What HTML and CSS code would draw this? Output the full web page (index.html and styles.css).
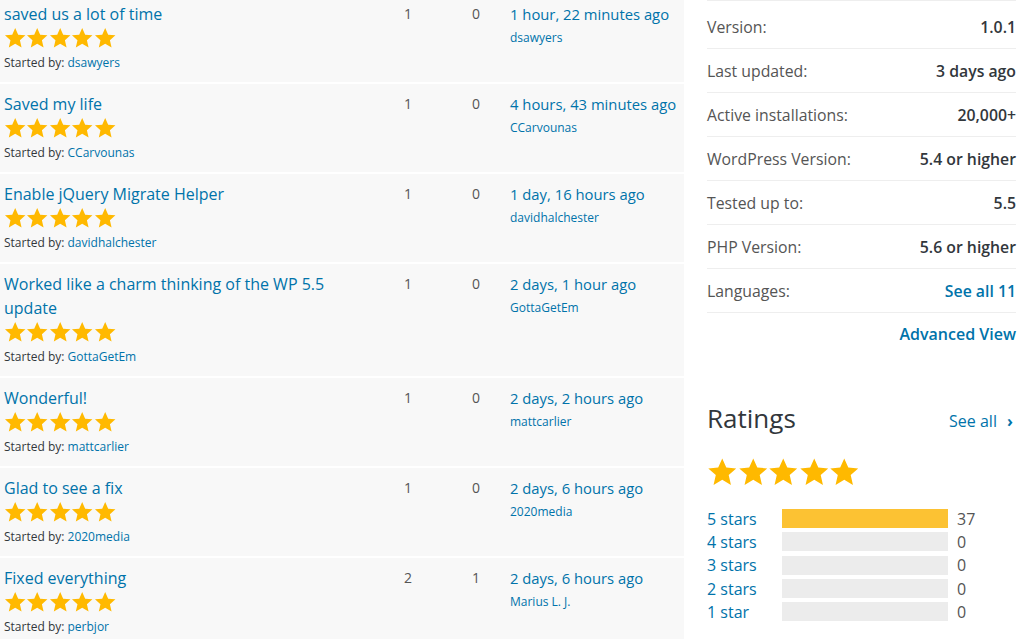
FILE: index.html
```html
<!DOCTYPE html>
<html lang="en">
<head>
  <meta charset="UTF-8" />
  <title>jQuery Migrate Helper - Support</title>
  <link rel="stylesheet" href="styles.css">
</head>
<body>
  <svg class="defs" width="0" height="0" aria-hidden="true">
    <symbol id="star" viewBox="0 0 20 20">
      <polygon points="10,1 12.7,7 19.3,7.6 14.3,12 15.8,18.6 10,15.2 4.2,18.6 5.7,12 0.7,7.6 7.3,7"/>
    </symbol>
  </svg>

  <div class="page">
    <div class="topics">
      <div class="topic">
        <div class="title">
          <a href="#">saved us a lot of time</a>
          <div class="stars"><svg><use href="#star"/></svg><svg><use href="#star"/></svg><svg><use href="#star"/></svg><svg><use href="#star"/></svg><svg><use href="#star"/></svg></div>
          <p class="starter">Started by: <a href="#">dsawyers</a></p>
        </div>
        <div class="count">1</div>
        <div class="count voices">0</div>
        <div class="fresh">
          <a href="#">1 hour, 22 minutes ago</a>
          <a class="author" href="#">dsawyers</a>
        </div>
      </div>

      <div class="topic">
        <div class="title">
          <a href="#">Saved my life</a>
          <div class="stars"><svg><use href="#star"/></svg><svg><use href="#star"/></svg><svg><use href="#star"/></svg><svg><use href="#star"/></svg><svg><use href="#star"/></svg></div>
          <p class="starter">Started by: <a href="#">CCarvounas</a></p>
        </div>
        <div class="count">1</div>
        <div class="count voices">0</div>
        <div class="fresh">
          <a href="#">4 hours, 43 minutes ago</a>
          <a class="author" href="#">CCarvounas</a>
        </div>
      </div>

      <div class="topic">
        <div class="title">
          <a href="#">Enable jQuery Migrate Helper</a>
          <div class="stars"><svg><use href="#star"/></svg><svg><use href="#star"/></svg><svg><use href="#star"/></svg><svg><use href="#star"/></svg><svg><use href="#star"/></svg></div>
          <p class="starter">Started by: <a href="#">davidhalchester</a></p>
        </div>
        <div class="count">1</div>
        <div class="count voices">0</div>
        <div class="fresh">
          <a href="#">1 day, 16 hours ago</a>
          <a class="author" href="#">davidhalchester</a>
        </div>
      </div>

      <div class="topic">
        <div class="title">
          <a href="#">Worked like a charm thinking of the WP 5.5 update</a>
          <div class="stars"><svg><use href="#star"/></svg><svg><use href="#star"/></svg><svg><use href="#star"/></svg><svg><use href="#star"/></svg><svg><use href="#star"/></svg></div>
          <p class="starter">Started by: <a href="#">GottaGetEm</a></p>
        </div>
        <div class="count">1</div>
        <div class="count voices">0</div>
        <div class="fresh">
          <a href="#">2 days, 1 hour ago</a>
          <a class="author" href="#">GottaGetEm</a>
        </div>
      </div>

      <div class="topic">
        <div class="title">
          <a href="#">Wonderful!</a>
          <div class="stars"><svg><use href="#star"/></svg><svg><use href="#star"/></svg><svg><use href="#star"/></svg><svg><use href="#star"/></svg><svg><use href="#star"/></svg></div>
          <p class="starter">Started by: <a href="#">mattcarlier</a></p>
        </div>
        <div class="count">1</div>
        <div class="count voices">0</div>
        <div class="fresh">
          <a href="#">2 days, 2 hours ago</a>
          <a class="author" href="#">mattcarlier</a>
        </div>
      </div>

      <div class="topic">
        <div class="title">
          <a href="#">Glad to see a fix</a>
          <div class="stars"><svg><use href="#star"/></svg><svg><use href="#star"/></svg><svg><use href="#star"/></svg><svg><use href="#star"/></svg><svg><use href="#star"/></svg></div>
          <p class="starter">Started by: <a href="#">2020media</a></p>
        </div>
        <div class="count">1</div>
        <div class="count voices">0</div>
        <div class="fresh">
          <a href="#">2 days, 6 hours ago</a>
          <a class="author" href="#">2020media</a>
        </div>
      </div>

      <div class="topic">
        <div class="title">
          <a href="#">Fixed everything</a>
          <div class="stars"><svg><use href="#star"/></svg><svg><use href="#star"/></svg><svg><use href="#star"/></svg><svg><use href="#star"/></svg><svg><use href="#star"/></svg></div>
          <p class="starter">Started by: <a href="#">perbjor</a></p>
        </div>
        <div class="count">2</div>
        <div class="count voices">1</div>
        <div class="fresh">
          <a href="#">2 days, 6 hours ago</a>
          <a class="author" href="#">Marius L. J.</a>
        </div>
      </div>
    </div>

    <aside class="sidebar">
      <ul class="meta">
        <li><span>Version:</span><strong>1.0.1</strong></li>
        <li><span>Last updated:</span><strong>3 days ago</strong></li>
        <li><span>Active installations:</span><strong>20,000+</strong></li>
        <li><span>WordPress Version:</span><strong>5.4 or higher</strong></li>
        <li><span>Tested up to:</span><strong>5.5</strong></li>
        <li><span>PHP Version:</span><strong>5.6 or higher</strong></li>
        <li><span>Languages:</span><a href="#">See all 11</a></li>
      </ul>
      <a class="advanced" href="#">Advanced View</a>

      <div class="ratings">
        <div class="ratings-head">
          <h2>Ratings</h2>
          <a href="#">See all <span class="chev">&#8250;</span></a>
        </div>
        <div class="big-stars"><svg><use href="#star"/></svg><svg><use href="#star"/></svg><svg><use href="#star"/></svg><svg><use href="#star"/></svg><svg><use href="#star"/></svg></div>
        <ul class="bars">
          <li><a href="#">5 stars</a><span class="bar"><span class="fill" style="width: 100%"></span></span><span class="num">37</span></li>
          <li><a href="#">4 stars</a><span class="bar"></span><span class="num">0</span></li>
          <li><a href="#">3 stars</a><span class="bar"></span><span class="num">0</span></li>
          <li><a href="#">2 stars</a><span class="bar"></span><span class="num">0</span></li>
          <li><a href="#">1 star</a><span class="bar"></span><span class="num">0</span></li>
        </ul>
      </div>
    </aside>
  </div>
</body>
</html>
```

FILE: styles.css
```css
* {
  margin: 0; padding: 0; box-sizing: border-box;
}

body {
  font-family: 'Open Sans', 'DejaVu Sans', sans-serif;
  color: #32373c;
  background: #fff;
  overflow: hidden;
}

a {
  color: #0073aa;
  text-decoration: none;
}

ul {
  list-style: none;
}

.defs {
  position: absolute;
}

.page {
  display: flex;
  padding-right: 8px;
}

/* topic list */

.topics {
  width: 684px;
  margin-top: -6px;
  display: flex;
  flex-direction: column;
  gap: 2px;
}

.topic {
  display: grid;
  grid-template-columns: 380px 56px 74px 174px;
  background: #f8f8f8;
  padding: 8px 0 10px;
}

.title {
  padding-left: 4px;
  padding-right: 8px;
}

.title > a {
  display: block;
  font-size: 16px;
  line-height: 24px;
}

.stars {
  display: flex;
  height: 23px;
  align-items: center;
}

.stars svg {
  width: 22.4px;
  height: 22px;
  fill: #ffb900;
}

.starter {
  margin-top: 5px;
  font-size: 12px;
  line-height: 18px;
}

.count {
  text-align: center;
  font-size: 14px;
  line-height: 24px;
  color: #555;
}

.count.voices {
  padding-left: 6px;
}

.fresh {
  display: flex;
  flex-direction: column;
  font-size: 14.8px;
  line-height: 24px;
}

.fresh .author {
  font-size: 12px;
}

/* sidebar */

.sidebar {
  flex: 1;
  margin-left: 23px;
}

.meta {
  border-top: 1px solid #eee;
  padding-top: 4px;
}

.meta li {
  display: flex;
  justify-content: space-between;
  align-items: center;
  height: 44px;
  border-bottom: 1px solid #eee;
  font-size: 15.8px;
  color: #555;
}

.meta strong,
.meta a {
  font-weight: 600;
  color: #32373c;
}

.meta a {
  color: #0073aa;
}

.advanced {
  display: block;
  text-align: right;
  font-size: 16px;
  font-weight: 600;
  line-height: 42px;
}

.ratings {
  margin-top: 45px;
}

.ratings-head {
  display: flex;
  justify-content: space-between;
  align-items: center;
}

.ratings-head h2 {
  font-size: 26px;
  font-weight: 400;
  line-height: 36px;
}

.ratings-head a {
  font-size: 16px;
  padding-right: 3px;
  margin-top: 6px;
}

.chev {
  margin-left: 6px;
  font-weight: 700;
}

.big-stars {
  display: flex;
  margin-top: 21px;
}

.big-stars svg {
  width: 30.5px;
  height: 30px;
  fill: #ffb900;
}

.bars {
  margin-top: 20px;
}

.bars li {
  display: flex;
  align-items: center;
  height: 23.3px;
  font-size: 16px;
}

.bars a {
  width: 75px;
}

.bar {
  display: block;
  width: 166px;
  height: 19px;
  background: #ececec;
}

.bar .fill {
  display: block;
  height: 100%;
  background: #fcc233;
}

.num {
  margin-left: 9px;
  color: #555;
}
```
